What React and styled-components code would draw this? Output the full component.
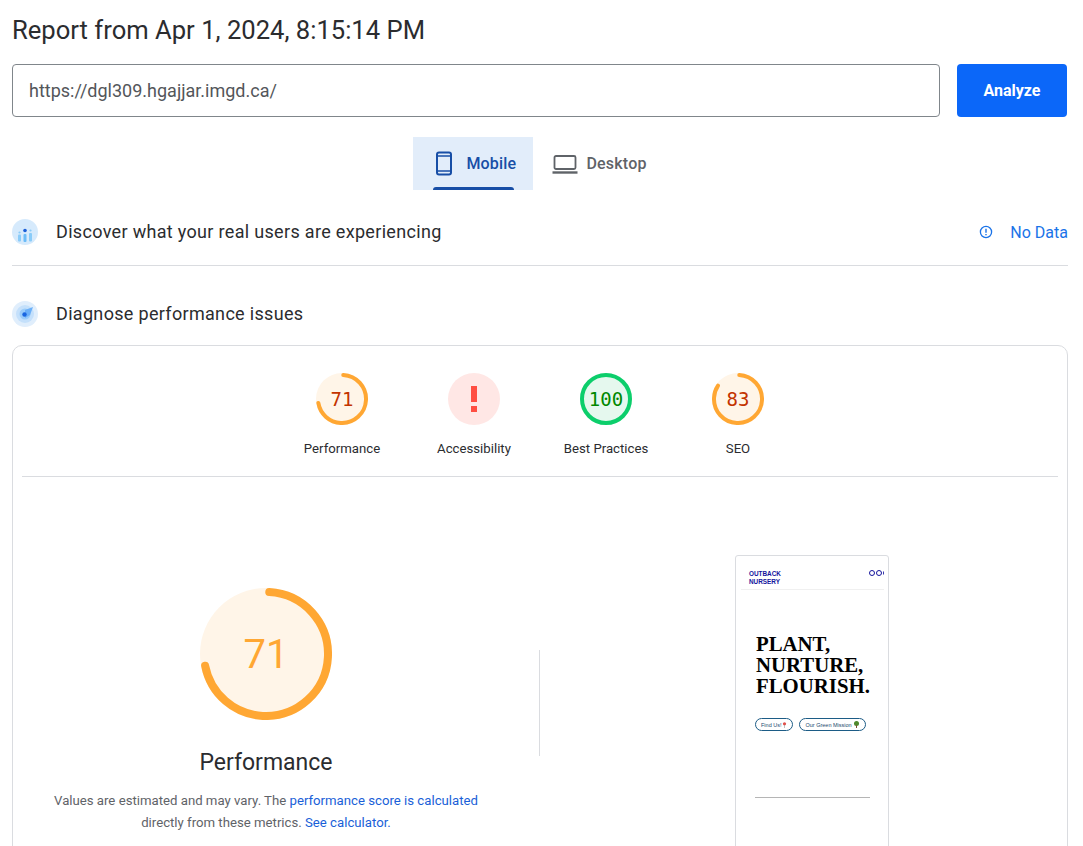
import React from 'react';
import styled, { createGlobalStyle } from 'styled-components';

const GlobalStyle = createGlobalStyle`
  html, body {
    margin: 0;
    height: 846px;
    overflow: hidden;
    background: #fff;
    font-family: Roboto, "Liberation Sans", sans-serif;
  }
`;

const Page = styled.div`
  width: 1056px;
  padding: 14px 15px 0 12px;
`;

const Title = styled.h1`
  margin: 0;
  font-size: 25.6px;
  line-height: 32px;
  font-weight: 400;
  color: #2b2c2f;
  font-family: Roboto, sans-serif;
`;

const SearchForm = styled.div`
  display: flex;
  gap: 17px;
  margin: 18px 1px 0 0;
`;

const UrlField = styled.div`
  flex: 1;
  height: 51px;
  display: flex;
  align-items: center;
  padding-left: 16px;
  border: 1px solid #80868b;
  border-radius: 4px;
  font-size: 18px;
  color: #53565a;
`;

const AnalyzeButton = styled.button`
  width: 110px;
  height: 53px;
  border: 0;
  border-radius: 4px;
  background: #0b67f9;
  color: #fff;
  font-family: inherit;
  font-size: 16px;
  font-weight: 700;
`;

const Tabs = styled.div`
  display: flex;
  justify-content: center;
  margin-top: 20px;
`;

const Tab = styled.div`
  position: relative;
  height: 53px;
  padding: 0 ${(p) => (p.$active ? '17px' : '20px')} 0 20px;
  display: flex;
  align-items: center;
  gap: 9px;
  font-size: 16px;
  font-weight: 500;
  letter-spacing: 0.2px;
  color: ${(p) => (p.$active ? '#174ea6' : '#5f6368')};
  background: ${(p) => (p.$active ? '#e2edfa' : 'transparent')};
`;

const TabBar = styled.span`
  position: absolute;
  left: 20px;
  right: 19px;
  bottom: 0;
  height: 3px;
  border-radius: 3px 3px 0 0;
  background: #174ea6;
`;

const LaptopSvg = styled.svg`
  margin: 0 -1px;
`;

const SectionRow = styled.div`
  display: flex;
  align-items: center;
  gap: 18px;
  padding: ${(p) => p.$padding};
  border-bottom: ${(p) => (p.$line ? '1px solid #dadce0' : '0')};
`;

const SectionTitle = styled.div`
  flex: 1;
  margin-top: -2px;
  font-size: 18px;
  font-weight: 400;
  letter-spacing: 0.32px;
  color: #2b2c2f;
`;

const NoData = styled.div`
  display: flex;
  align-items: center;
  gap: 17px;
  font-size: 16px;
  color: #1a73e8;
`;

const Card = styled.div`
  height: 700px;
  margin-top: 5px;
  padding: 0 9px;
  border: 1px solid #dadce0;
  border-radius: 10px;
`;

const GaugeRow = styled.div`
  display: flex;
  justify-content: center;
  padding: 27px 0 19px;
  border-bottom: 1px solid #dadce0;
`;

const GaugeItem = styled.div`
  width: 132px;
  display: flex;
  flex-direction: column;
  align-items: center;
`;

const GaugeDial = styled.div`
  position: relative;
  width: ${(p) => p.$size}px;
  height: ${(p) => p.$size}px;
`;

const GaugeValue = styled.div`
  position: absolute;
  inset: 0;
  display: flex;
  align-items: center;
  justify-content: center;
  font-family: "DejaVu Sans Mono", monospace;
  font-size: 19px;
  color: ${(p) => p.$color};
`;

const BigValue = styled(GaugeValue)`
  font-family: Roboto, sans-serif;
  font-size: 40px;
`;

const GaugeLabel = styled.div`
  margin-top: 16px;
  font-size: 13.2px;
  line-height: 16px;
  white-space: nowrap;
  color: #2b2c2f;
`;

const Summary = styled.div`
  display: flex;
  align-items: flex-start;
  padding-top: 78px;
`;

const ScoreColumn = styled.div`
  width: 488px;
  margin-top: 33px;
  display: flex;
  flex-direction: column;
  align-items: center;
`;

const ScoreTitle = styled.div`
  margin-top: 27px;
  font-size: 23px;
  line-height: 32px;
  color: #2b2c2f;
`;

const ScoreNote = styled.p`
  width: 440px;
  margin: 11px 0 0;
  text-align: center;
  font-size: 13.2px;
  line-height: 22px;
  color: #5f6368;
`;

const NoteLink = styled.span`
  color: #1a5fd8;
`;

const VDivider = styled.div`
  width: 1px;
  height: 106px;
  margin: 95px 0 0 29px;
  background: #dadce0;
`;

const Frame = styled.div`
  width: 152px;
  height: 320px;
  margin-left: 195px;
  border: 1px solid #dadce0;
  border-radius: 3px;
  overflow: hidden;
`;

const FrameHeader = styled.div`
  display: flex;
  align-items: center;
  justify-content: space-between;
  height: 33px;
  margin: 0 4px 0 5px;
  padding-left: 8px;
  overflow: hidden;
  border-bottom: 1px solid #f0f0f0;
`;

const Logo = styled.div`
  font-family: "Liberation Sans", sans-serif;
  font-size: 6.4px;
  line-height: 8px;
  font-weight: 700;
  color: #14149c;
  padding-top: 11px;
`;

const Dots = styled.div`
  display: flex;
  gap: 1px;
  margin-right: -5px;
`;

const Dot = styled.span`
  width: 4px;
  height: 4px;
  flex: none;
  border: 1px solid #14149c;
  border-radius: 50%;
`;

const Hero = styled.div`
  margin: 43px 0 0 20px;
  font-family: "Liberation Serif", serif;
  font-size: 20.8px;
  line-height: 21px;
  font-weight: 700;
  color: #000;
`;

const PillRow = styled.div`
  display: flex;
  gap: 6px;
  margin: 22px 0 0 19px;
`;

const Pill = styled.div`
  height: 11px;
  padding: 0 5px;
  display: flex;
  align-items: center;
  gap: 1px;
  font-family: "Liberation Sans", sans-serif;
  font-size: 5.5px;
  color: #1c4a6e;
  white-space: nowrap;
  border: 1px solid #1c5c86;
  border-radius: 7px;
`;

const FrameRule = styled.div`
  width: 115px;
  height: 1px;
  margin: 66px 0 0 19px;
  background: #b5b5b5;
`;

const Gauge = ({ score, size, stroke, track, color }) => {
  const r = (size - stroke) / 2;
  const c = 2 * Math.PI * r;
  return (
    <svg width={size} height={size} viewBox={`0 0 ${size} ${size}`}>
      <circle cx={size / 2} cy={size / 2} r={size / 2} fill={track} />
      <circle
        cx={size / 2}
        cy={size / 2}
        r={r}
        fill="none"
        stroke={color}
        strokeWidth={stroke}
        strokeLinecap="round"
        strokeDasharray={`${(score / 100) * c} ${c}`}
        transform={`rotate(${score === 100 ? -90 : -87} ${size / 2} ${size / 2})`}
      />
    </svg>
  );
};

const PhoneIcon = () => (
  <svg width="24" height="26" viewBox="0 0 24 26" fill="none" stroke="#174ea6" strokeWidth="2">
    <rect x="4" y="1.5" width="14" height="22" rx="2" />
    <path d="M4 5h14M4 20h14" strokeWidth="1.3" />
  </svg>
);

const LaptopIcon = () => (
  <LaptopSvg width="26" height="24" viewBox="0 0 26 24" fill="none" stroke="#5f6368">
    <rect x="2.5" y="4" width="21" height="13" rx="1.5" strokeWidth="1.8" />
    <path d="M0.5 20.5h25" strokeWidth="2.4" />
  </LaptopSvg>
);

const InfoIcon = () => (
  <svg width="14" height="14" viewBox="0 0 14 14" fill="none" stroke="#1a73e8">
    <circle cx="7" cy="7" r="5.6" strokeWidth="1.3" />
    <path d="M7 3.8v4M7 9v1.2" strokeWidth="1.4" />
  </svg>
);

const CruxIcon = () => (
  <svg width="26" height="26" viewBox="0 0 26 26">
    <circle cx="13" cy="13" r="13" fill="#d6eafc" />
    <rect x="6" y="15.5" width="3" height="7" rx="1" fill="#8accf9" />
    <rect x="11.5" y="15" width="3" height="8" rx="1" fill="#6cbcf8" />
    <rect x="17" y="14" width="3" height="8.5" rx="1" fill="#8accf9" />
    <circle cx="13" cy="11.5" r="1.8" fill="#1a5fd8" />
    <circle cx="7.5" cy="13.5" r="1.1" fill="#8accf9" />
    <circle cx="18.5" cy="11.5" r="1.1" fill="#8accf9" />
  </svg>
);

const DiagnoseIcon = () => (
  <svg width="26" height="26" viewBox="0 0 26 26">
    <circle cx="13" cy="13" r="13" fill="#e0eefc" />
    <circle cx="13" cy="13" r="9" fill="#c4e0fb" />
    <circle cx="13" cy="13" r="5.5" fill="#9accfa" />
    <path d="M13 9l8-3-3 8-5 3z" fill="#6cb0f8" />
    <circle cx="12.5" cy="13.5" r="2.2" fill="#1a66e0" />
  </svg>
);

const PinIcon = () => (
  <svg width="5" height="6" viewBox="0 0 5 6">
    <circle cx="2.5" cy="1.8" r="1.6" fill="#e0504a" />
    <path d="M2.5 3v3" stroke="#999" strokeWidth="0.6" />
  </svg>
);

const TreeIcon = () => (
  <svg width="7" height="7" viewBox="0 0 7 7">
    <circle cx="3.5" cy="2.6" r="2.5" fill="#4f8a2c" />
    <rect x="3" y="4" width="1" height="3" fill="#7a5230" />
  </svg>
);

const ALERT_RED = '#ff4e42';

const CATEGORIES = [
  { label: 'Performance', score: 71 },
  { label: 'Accessibility', alert: true },
  { label: 'Best Practices', score: 100 },
  { label: 'SEO', score: 83 },
];

const CategoryGauge = ({ label, score, alert }) => {
  const good = score === 100;
  return (
    <GaugeItem>
      <GaugeDial $size={52}>
        {alert ? (
          <svg width="52" height="52" viewBox="0 0 52 52">
            <circle cx="26" cy="26" r="26" fill="#ffe7e5" />
            <rect x="23" y="13" width="6" height="16" fill={ALERT_RED} />
            <rect x="23" y="33" width="6" height="6" fill={ALERT_RED} />
          </svg>
        ) : (
          <>
            <Gauge
              score={score}
              size={52}
              stroke={4}
              track={good ? '#e5f8ee' : '#fff5e8'}
              color={good ? '#0cce6b' : '#ffa733'}
            />
            <GaugeValue $color={good ? '#008800' : '#c33300'}>{score}</GaugeValue>
          </>
        )}
      </GaugeDial>
      <GaugeLabel>{label}</GaugeLabel>
    </GaugeItem>
  );
};

const App = () => {
  return (
    <Page>
      <GlobalStyle />
      <Title>Report from Apr 1, 2024, 8:15:14 PM</Title>
      <SearchForm>
        <UrlField>https://dgl309.hgajjar.imgd.ca/</UrlField>
        <AnalyzeButton>Analyze</AnalyzeButton>
      </SearchForm>
      <Tabs>
        <Tab $active>
          <PhoneIcon />
          Mobile
          <TabBar />
        </Tab>
        <Tab>
          <LaptopIcon />
          Desktop
        </Tab>
      </Tabs>
      <SectionRow $padding="29px 0 20px" $line>
        <CruxIcon />
        <SectionTitle>Discover what your real users are experiencing</SectionTitle>
        <NoData>
          <InfoIcon />
          No Data
        </NoData>
      </SectionRow>
      <SectionRow $padding="35px 0 13px">
        <DiagnoseIcon />
        <SectionTitle>Diagnose performance issues</SectionTitle>
      </SectionRow>
      <Card>
        <GaugeRow>
          {CATEGORIES.map((category) => (
            <CategoryGauge key={category.label} {...category} />
          ))}
        </GaugeRow>
        <Summary>
          <ScoreColumn>
            <GaugeDial $size={132}>
              <Gauge score={71} size={132} stroke={8} track="#fff5e8" color="#ffa733" />
              <BigValue $color="#ffa733">71</BigValue>
            </GaugeDial>
            <ScoreTitle>Performance</ScoreTitle>
            <ScoreNote>
              Values are estimated and may vary. The <NoteLink>performance score is calculated</NoteLink>{' '}
              directly from these metrics. <NoteLink>See calculator.</NoteLink>
            </ScoreNote>
          </ScoreColumn>
          <VDivider />
          <Frame>
            <FrameHeader>
              <Logo>
                OUTBACK
                <br />
                NURSERY
              </Logo>
              <Dots>
                <Dot />
                <Dot />
                <Dot />
              </Dots>
            </FrameHeader>
            <Hero>
              PLANT,
              <br />
              NURTURE,
              <br />
              FLOURISH.
            </Hero>
            <PillRow>
              <Pill>
                Find Us! <PinIcon />
              </Pill>
              <Pill>
                Our Green Mission <TreeIcon />
              </Pill>
            </PillRow>
            <FrameRule />
          </Frame>
        </Summary>
      </Card>
    </Page>
  );
};

export default App;
